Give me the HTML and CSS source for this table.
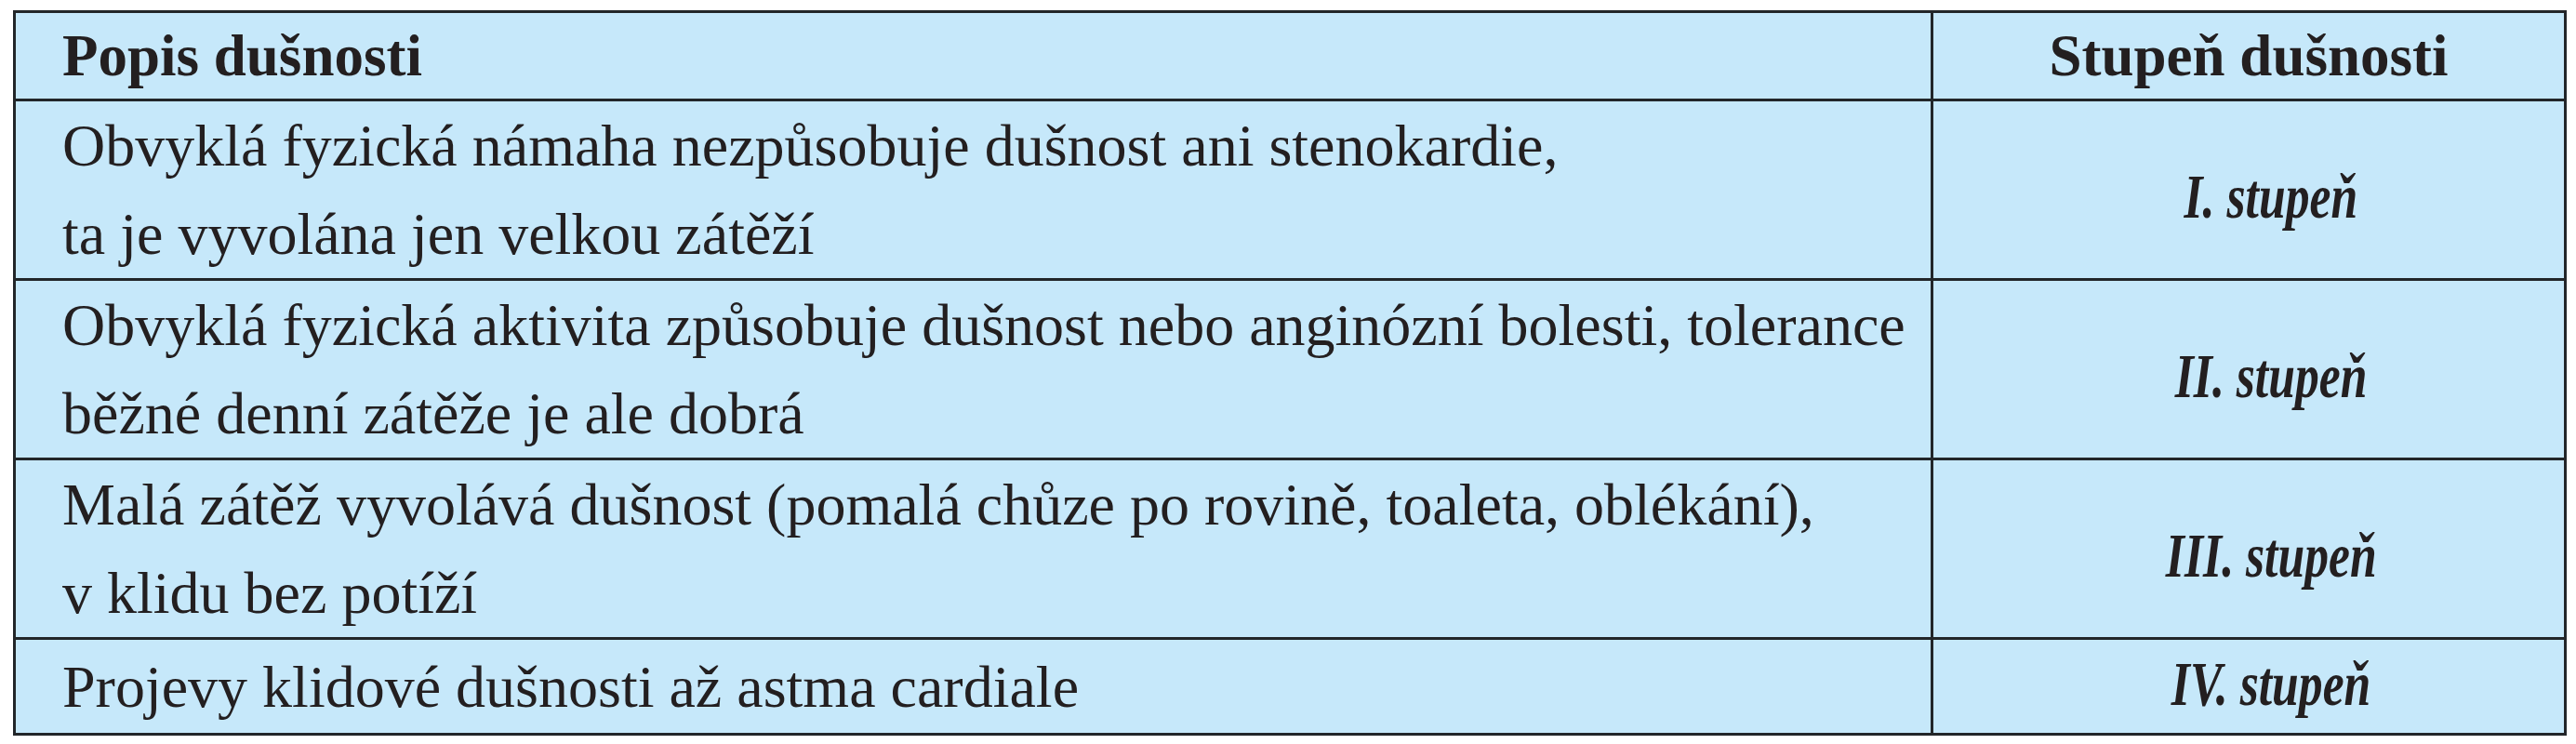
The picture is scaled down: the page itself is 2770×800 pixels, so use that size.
FILE: index.html
```html
<!DOCTYPE html>
<html lang="cs">
<head>
<meta charset="utf-8">
<link rel="stylesheet" href="styles.css">
</head>
<body>
<table class="grade-table">
  <colgroup>
    <col class="col-desc">
    <col class="col-grade">
  </colgroup>
  <thead>
    <tr class="row-head">
      <th class="desc">Popis dušnosti</th>
      <th class="grade">Stupeň dušnosti</th>
    </tr>
  </thead>
  <tbody>
    <tr class="row-2">
      <td class="desc">Obvyklá fyzická námaha nezpůsobuje dušnost ani stenokardie,<br>ta je vyvolána jen velkou zátěží</td>
      <td class="grade"><span class="grade-label">I. stupeň</span></td>
    </tr>
    <tr class="row-2">
      <td class="desc">Obvyklá fyzická aktivita způsobuje dušnost nebo anginózní bolesti, tolerance<br>běžné denní zátěže je ale dobrá</td>
      <td class="grade"><span class="grade-label">II. stupeň</span></td>
    </tr>
    <tr class="row-2">
      <td class="desc">Malá zátěž vyvolává dušnost (pomalá chůze po rovině, toaleta, oblékání),<br>v klidu bez potíží</td>
      <td class="grade"><span class="grade-label">III. stupeň</span></td>
    </tr>
    <tr class="row-1">
      <td class="desc">Projevy klidové dušnosti až astma cardiale</td>
      <td class="grade"><span class="grade-label">IV. stupeň</span></td>
    </tr>
  </tbody>
</table>
</body>
</html>
```
FILE: styles.css
```css
html, body {
  margin: 0;
  padding: 0;
  background: #ffffff;
}
body {
  padding: 11px 0 0 14px;
}
.grade-table {
  border-collapse: collapse;
  table-layout: fixed;
  width: 2743px;
  background: #c6e8fa;
  color: #231f20;
  font-family: "Liberation Serif", "Times New Roman", serif;
  border: 3px solid #222629;
}
.col-desc { width: 2062px; }
.col-grade { width: 681px; }
.grade-table th,
.grade-table td {
  border: 3px solid #222629;
  padding: 0;
  vertical-align: middle;
}
.row-head { height: 95px; }
.row-2 { height: 193px; }
.row-1 { height: 103px; }
th {
  font-size: 63px;
  font-weight: bold;
}
th.desc {
  text-align: left;
  padding-left: 50px;
}
th.grade {
  text-align: center;
}
td.desc {
  font-size: 64px;
  line-height: 95px;
  padding-left: 50px;
  text-align: left;
}
td.grade {
  font-size: 68px;
  font-weight: bold;
  font-style: italic;
  text-align: center;
  padding-left: 48px;
}
.grade-label {
  display: inline-block;
  transform: scaleX(0.76);
  transform-origin: center;
  padding-top: 14px;
}
.row-1 .grade-label {
  padding-top: 0;
  padding-bottom: 6px;
}
```
